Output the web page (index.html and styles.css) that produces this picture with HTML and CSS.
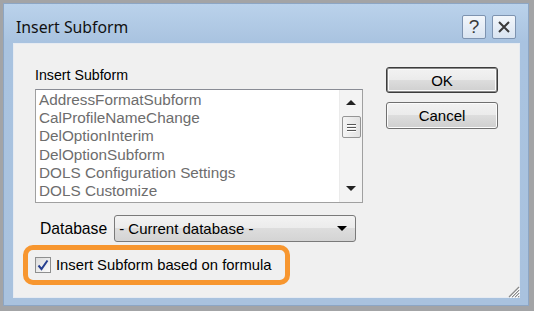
FILE: index.html
```html
<!DOCTYPE html>
<html>
<head>
<meta charset="utf-8">
<link rel="stylesheet" href="styles.css">
</head>
<body>
<div class="window">
  <div class="titlebar">
    <span class="title">Insert Subform</span>
    <div class="tbtns">
      <span class="tbtn">?</span>
      <span class="tbtn"><svg width="14" height="14" viewBox="0 0 14 14"><path d="M2 2L12 12M12 2L2 12" stroke="#3a3a3a" stroke-width="2" fill="none"/></svg></span>
    </div>
  </div>
  <div class="client">
    <div class="leftcol">
      <div class="label">Insert Subform</div>
      <div class="listbox">
        <ul class="items">
          <li>AddressFormatSubform</li>
          <li>CalProfileNameChange</li>
          <li>DelOptionInterim</li>
          <li>DelOptionSubform</li>
          <li>DOLS Configuration Settings</li>
          <li>DOLS Customize</li>
        </ul>
        <div class="scrollbar">
          <div class="sarrow"><svg width="10" height="6" viewBox="0 0 10 6"><path d="M5 0L10 5H0Z" fill="#222"/></svg></div>
          <div class="thumb"><span></span><span></span><span></span></div>
          <div class="strack"></div>
          <div class="sarrow"><svg width="10" height="6" viewBox="0 0 10 6"><path d="M0 0H10L5 5Z" fill="#222"/></svg></div>
        </div>
      </div>
      <div class="dbrow">
        <span class="dblabel">Database</span>
        <div class="select">
          <span>- Current database -</span>
          <svg width="10" height="6" viewBox="0 0 10 6"><path d="M0 0H10L5 5Z" fill="#000"/></svg>
        </div>
      </div>
      <div class="highlight">
        <span class="checkbox"><svg width="12" height="12" viewBox="0 0 12 12"><path d="M1.5 6.5L4.5 10L10.5 1.5" stroke="#263f8f" stroke-width="2" fill="none"/></svg></span>
        <span class="cblabel">Insert Subform based on formula</span>
      </div>
    </div>
    <div class="rightcol">
      <div class="btn default">OK</div>
      <div class="btn">Cancel</div>
    </div>
    <svg class="grip" width="14" height="14" viewBox="0 0 14 14"><path d="M13 3L3 13M13 6L6 13M13 9L9 13M13 12L12 13" stroke="#8a8a8a" stroke-width="1.2"/><path d="M14 4L4 14M14 7L7 14M14 10L10 14" stroke="#fff" stroke-width="1"/></svg>
  </div>
</div>
</body>
</html>
```
FILE: styles.css
```css
html, body {
  margin: 0;
  padding: 0;
}
body {
  background: #a3a4a6;
  width: 534px;
  height: 311px;
  overflow: hidden;
  font-family: "Liberation Sans", Arial, sans-serif;
}
.window {
  box-sizing: border-box;
  margin: 3px 0 0 3px;
  width: 526px;
  height: 303px;
  border: 1px solid #8da6c4;
  background: linear-gradient(#bad2eb 0, #a9c3e0 38px, #a9c2de 100%);
  padding: 0 8px 7px 9px;
  display: flex;
  flex-direction: column;
}
.titlebar {
  height: 39px;
  box-sizing: border-box;
  padding: 7px 4px 0 3px;
  display: flex;
  align-items: center;
  justify-content: space-between;
}
.title {
  font-family: "Noto Sans", "Open Sans", sans-serif;
  font-size: 15.8px;
  color: #111;
}
.tbtns {
  display: flex;
  gap: 6px;
}
.tbtn {
  box-sizing: border-box;
  width: 24px;
  height: 24px;
  border: 1px solid #7d93b0;
  border-radius: 2px;
  background: linear-gradient(#f2f6fb, #d9e4f1);
  display: flex;
  align-items: center;
  justify-content: center;
  font-family: "Liberation Sans", sans-serif;
  font-size: 19px;
  color: #3a3a3a;
}
.client {
  position: relative;
  flex: 1;
  background: #f0f0f0;
  box-shadow: inset 0 0 0 1px #e6ebf2;
  padding: 24px 22px 0 22px;
  display: flex;
  gap: 23px;
}
.leftcol {
  width: 328px;
  display: flex;
  flex-direction: column;
}
.label {
  font-size: 14.2px;
  line-height: 16px;
  color: #000;
}
.listbox {
  margin-top: 6px;
  box-sizing: border-box;
  height: 114px;
  border: 1px solid #a0a0a0;
  border-top-color: #898c95;
  background: #fff;
  display: flex;
}
.items {
  flex: 1;
  list-style: none;
  margin: 0;
  padding: 1px 0 0 3px;
  font-size: 15.3px;
  line-height: 18.2px;
  color: #6d6d6d;
  white-space: nowrap;
  overflow: hidden;
}
.scrollbar {
  width: 22px;
  background: #f3f3f3;
  border-left: 1px solid #ebebeb;
  display: flex;
  flex-direction: column;
  align-items: center;
}
.sarrow {
  height: 26px;
  display: flex;
  align-items: center;
  justify-content: center;
}
.thumb {
  box-sizing: border-box;
  width: 19px;
  height: 22px;
  margin-left: 1px;
  border: 1px solid #959595;
  border-radius: 2px;
  background: linear-gradient(90deg, #f4f4f4, #e2e2e2);
  display: flex;
  flex-direction: column;
  justify-content: center;
  align-items: center;
  gap: 2px;
}
.thumb span {
  width: 9px;
  height: 1px;
  background: #555;
  box-shadow: 0 1px 0 #fff;
}
.strack {
  flex: 1;
}
.dbrow {
  margin-top: 12px;
  padding-left: 5px;
  display: flex;
  align-items: center;
  gap: 7px;
}
.dblabel {
  font-size: 15.7px;
  color: #000;
}
.select {
  box-sizing: border-box;
  width: 242px;
  height: 27px;
  border: 1px solid #7a7a7a;
  border-radius: 3px;
  background: linear-gradient(#f3f3f3 0, #ebebeb 50%, #dddddd 50%, #d4d4d4 100%);
  display: flex;
  align-items: center;
  justify-content: space-between;
  padding: 0 8px 0 4px;
  font-size: 15px;
  color: #000;
}
.highlight {
  margin: 3px 0 0 -12px;
  box-sizing: border-box;
  width: 267px;
  height: 40px;
  border: 5px solid #f7962f;
  border-radius: 10px;
  padding: 0 0 0 7px;
  display: flex;
  align-items: center;
  gap: 5px;
}
.checkbox {
  box-sizing: border-box;
  width: 16px;
  height: 16px;
  border: 1px solid #8e8f8f;
  background: linear-gradient(135deg, #dcdcdc, #fbfbfb);
  display: flex;
  align-items: center;
  justify-content: center;
}
.cblabel {
  font-size: 14.8px;
  color: #000;
  white-space: nowrap;
}
.rightcol {
  width: 112px;
  display: flex;
  flex-direction: column;
  gap: 9px;
}
.btn {
  box-sizing: border-box;
  height: 27px;
  border: 1px solid #707070;
  border-radius: 3px;
  background: linear-gradient(#f2f2f2 0, #ebebeb 50%, #dddddd 50%, #cfcfcf 100%);
  box-shadow: inset 0 0 0 1px #fcfcfc;
  display: flex;
  align-items: center;
  justify-content: center;
  font-size: 15px;
  color: #000;
}
.btn.default {
  height: 26px;
  border: 1px solid #3c3c3c;
  box-shadow: inset 0 0 0 1px #8a8a8a, inset 0 0 0 2px #fbfbfb;
}
.grip {
  position: absolute;
  right: 0;
  bottom: 0;
}
```
